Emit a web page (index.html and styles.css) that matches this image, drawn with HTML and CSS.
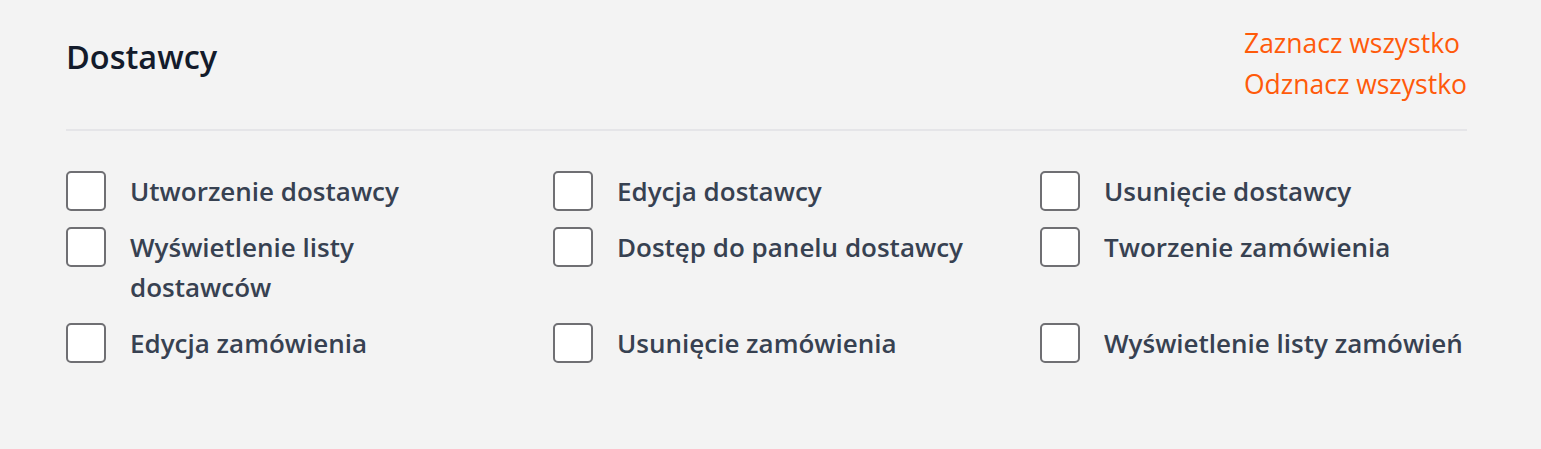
FILE: index.html
```html
<!DOCTYPE html>
<html lang="pl">
<head>
<meta charset="utf-8">
<link rel="stylesheet" href="styles.css">
</head>
<body>
<section class="panel">
  <header class="panel-head">
    <h2 class="panel-title">Dostawcy</h2>
    <div class="panel-actions">
      <a class="action-link" href="#">Zaznacz wszystko</a>
      <a class="action-link" href="#">Odznacz wszystko</a>
    </div>
  </header>
  <div class="perm-grid">
    <label class="perm"><span class="box"></span><span class="perm-text">Utworzenie dostawcy</span></label>
    <label class="perm"><span class="box"></span><span class="perm-text">Edycja dostawcy</span></label>
    <label class="perm"><span class="box"></span><span class="perm-text">Usunięcie dostawcy</span></label>
    <label class="perm"><span class="box"></span><span class="perm-text">Wyświetlenie listy dostawców</span></label>
    <label class="perm"><span class="box"></span><span class="perm-text">Dostęp do panelu dostawcy</span></label>
    <label class="perm"><span class="box"></span><span class="perm-text">Tworzenie zamówienia</span></label>
    <label class="perm"><span class="box"></span><span class="perm-text">Edycja zamówienia</span></label>
    <label class="perm"><span class="box"></span><span class="perm-text">Usunięcie zamówienia</span></label>
    <label class="perm"><span class="box"></span><span class="perm-text">Wyświetlenie listy zamówień</span></label>
  </div>
</section>
</body>
</html>
```
FILE: styles.css
```css
html, body {
  margin: 0;
  padding: 0;
  background: #f3f3f3;
}
body {
  font-family: "Open Sans", "Noto Sans", sans-serif;
}
.panel {
  width: 1401px;
  margin-left: 66px;
  padding-top: 23px;
}
.panel-head {
  display: flex;
  justify-content: space-between;
  align-items: flex-start;
  padding-bottom: 24px;
  border-bottom: 2px solid #e5e5e8;
}
.panel-title {
  margin: 14px 0 0 0;
  font-size: 32.5px;
  line-height: 40px;
  font-weight: 600;
  color: #131b2b;
}
.panel-actions {
  display: flex;
  flex-direction: column;
  align-items: flex-start;
}
.action-link {
  font-size: 26.5px;
  line-height: 41px;
  color: #ff5a0a;
  text-decoration: none;
}
.perm-grid {
  display: grid;
  grid-template-columns: repeat(3, 1fr);
  column-gap: 60px;
  row-gap: 16px;
  padding-top: 40px;
}
.perm {
  display: flex;
  align-items: flex-start;
  gap: 24px;
}
.box {
  flex: none;
  width: 36px;
  height: 36px;
  border: 2px solid #6f6f73;
  border-radius: 5px;
  background: #ffffff;
}
.perm-text {
  font-size: 26px;
  line-height: 40px;
  font-weight: 600;
  color: #374151;
}
```
